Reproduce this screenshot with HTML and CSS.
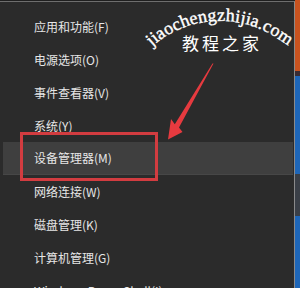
FILE: index.html
```html
<!DOCTYPE html>
<html>
<head>
<meta charset="utf-8">
<link rel="stylesheet" href="styles.css">
</head>
<body>
<div class="screen">
  <div class="panel">
    <ul class="menu">
      <li class="item">应用和功能(F)</li>
      <li class="item">电源选项(O)</li>
      <li class="item">事件查看器(V)</li>
      <li class="item">系统(Y)</li>
      <li class="item active">设备管理器(M)</li>
      <li class="item">网络连接(W)</li>
      <li class="item">磁盘管理(K)</li>
      <li class="item">计算机管理(G)</li>
      <li class="item">Windows PowerShell(I)</li>
    </ul>
  </div>
  <div class="strip">
    <div class="seg orange"></div>
    <div class="seg dark1"></div>
    <div class="seg blue1"></div>
    <div class="seg dark2"></div>
    <div class="seg blue2"></div>
  </div>
  <div class="mark-box"></div>
  <svg class="overlay" xmlns="http://www.w3.org/2000/svg" width="300" height="288" viewBox="0 0 300 288">
    <polygon class="arrow" points="213.5,63.5 179,127.5 182.5,132 168,139.5 171,119 174.8,124.3 212.5,63.5"/>
    <text class="wm-latin"
      x="152.0 155.9 160.0 166.9 174.9 182.4 191.1 199.0 208.1 217.3 225.5 234.6 239.7 244.7 249.6 257.3 261.6 268.9 276.8"
      y="46.6 43.3 40.3 35.8 31.4 28.1 25.1 23.2 21.7 21.0 21.1 22.0 22.9 24.0 25.3 28.0 29.8 33.3 38.1"
      rotate="-41.3 -38.45 -35.61 -31.07 -25.94 -21.4 -16.28 -11.74 -6.62 -1.5 3.04 8.16 11.0 13.85 16.69 21.24 23.8 28.34 33.46">jiaochengzhijia.com</text>
    <text class="wm-cjk" x="182" y="50">教程之家</text>
  </svg>
</div>
</body>
</html>
```

FILE: styles.css
```css
html, body {
  margin: 0;
  padding: 0;
  background: #2b2b2b;
}
.screen {
  position: relative;
  width: 300px;
  height: 288px;
  overflow: hidden;
  display: flex;
  background: #1f1f1f;
}
.panel {
  width: 295px;
  margin-top: 1px;
  height: 287px;
  box-sizing: border-box;
  background: #2b2b2b;
  border-top: 1px solid #6e6e6e;
  border-right: 1px solid #8a8a8a;
}
.menu {
  list-style: none;
  margin: 0;
  padding: 8px 0 0 0;
}
.item {
  height: 33px;
  line-height: 33px;
  padding-left: 34px;
  font-family: "Noto Sans CJK SC", "Liberation Sans", sans-serif;
  font-size: 12px;
  color: #e6e6e6;
  white-space: nowrap;
}
.item.active {
  background: #3f3f3f;
  margin-left: 3px;
  margin-right: 1px;
  padding-left: 31px;
  border-bottom: 1px solid #474747;
  height: 32px;
  line-height: 32px;
}
.strip {
  flex: 1;
  display: flex;
  flex-direction: column;
}
.seg { width: 100%; }
.orange { height: 71px; background: #c9531f; }
.dark1 { height: 5px; background: #3a2c33; }
.blue1 { height: 98px; background: #1e66b8; }
.dark2 { height: 42px; background: #3a3f47; }
.blue2 { flex: 1; background: #1e66b8; }
.mark-box {
  position: absolute;
  left: 20px;
  top: 132px;
  width: 132px;
  height: 43px;
  border: 3px solid #d23c40;
}
.overlay {
  position: absolute;
  left: 0;
  top: 0;
}
.arrow { fill: #e63a3f; }
.wm-latin {
  font-family: "Liberation Serif", serif;
  font-size: 18px;
  fill: #ffffff;
  stroke: #ffffff;
  stroke-width: 0.4px;
}
.wm-cjk {
  font-family: "Noto Sans CJK SC", sans-serif;
  font-size: 17px;
  letter-spacing: 3px;
  fill: #ffffff;
}
```
